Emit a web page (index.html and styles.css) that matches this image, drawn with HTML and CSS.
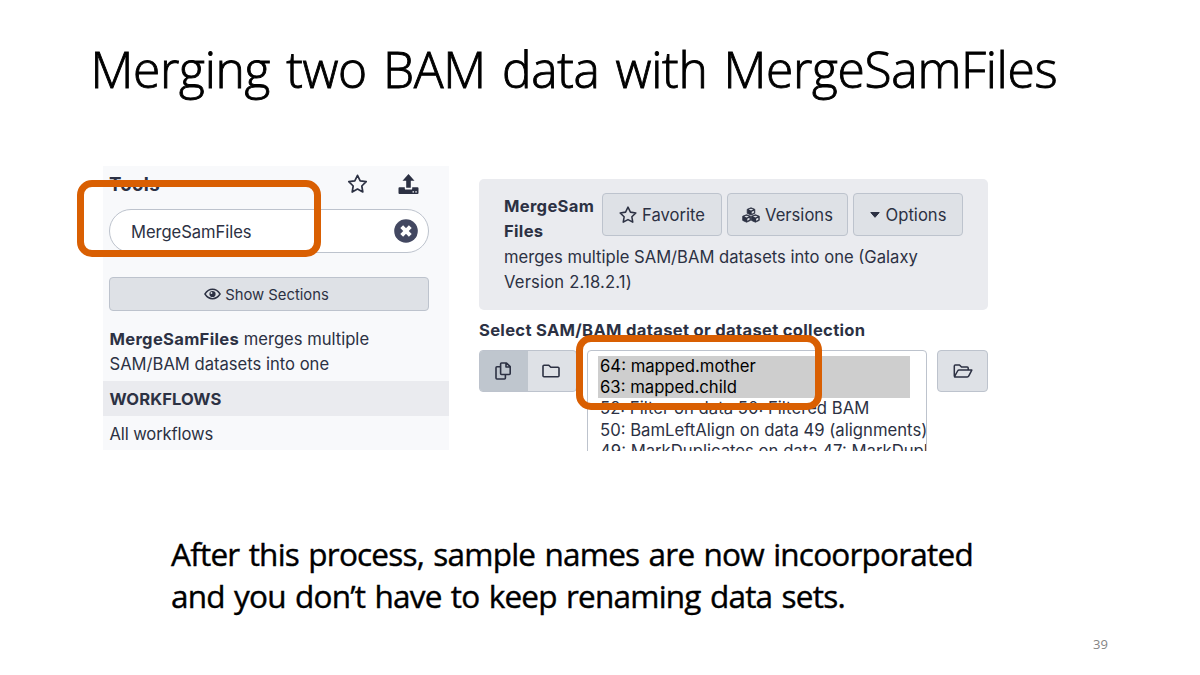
FILE: index.html
```html
<!DOCTYPE html>
<html lang="en">
<head>
<meta charset="utf-8">
<title>Merging two BAM data with MergeSamFiles</title>
<link rel="stylesheet" href="styles.css">
</head>
<body>
<svg width="0" height="0" class="defs">
  <symbol id="star" viewBox="0 0 20 20"><path d="M10 1.300l2.700 5.500 6 .9-4.400 4.300 1 6-5.300-2.900L4.700 18l1-6L1.300 7.700l6-.9z" fill="none" stroke="currentColor" stroke-width="1.700" stroke-linejoin="round"/></symbol>
</svg>
<main class="slide">
  <h1 class="title">Merging two BAM data with MergeSamFiles</h1>
  <div class="figures">
    <section class="tools">
      <header class="tools-head">
        <b>Tools</b>
        <svg class="ico20"><use href="#star"/></svg>
        <svg class="ico20" viewBox="0 0 20 20"><path d="M10 0l6 6.700h-3.700v7H7.700v-7H4z" fill="currentColor"/><path d="M0 14.200q0-1 1-1h5.300v1.500q0 .9 1 .9h5.400q1 0 1-.9v-1.500H19q1 0 1 1V19q0 1-1 1H1q-1 0-1-1z" fill="currentColor"/><path d="M14 17.300h1.500v1.200H14zM16.800 17.300h1.500v1.200h-1.500z" fill="#f8f9fb"/></svg>
      </header>
      <div class="search"><span>MergeSamFiles</span>
        <svg class="clear" viewBox="0 0 24 24"><circle cx="12" cy="12" r="11.800" fill="#434861"/><path d="M7.700 7.700l8.600 8.600M16.300 7.700l-8.600 8.600" stroke="#fff" stroke-width="4"/></svg>
      </div>
      <div class="btn sections">
        <svg class="eye" viewBox="0 0 18 12"><path d="M1 6q3.200-5 8-5t8 5q-3.200 5-8 5T1 6z" fill="none" stroke="currentColor" stroke-width="1.500"/><circle cx="9" cy="6" r="3.300" fill="currentColor"/><circle cx="7.900" cy="4.900" r="1" fill="#dee1e6"/></svg>
        <span>Show Sections</span>
      </div>
      <p class="result"><b>MergeSamFiles</b> merges multiple<br>SAM/BAM datasets into one</p>
      <div class="wf"><b>WORKFLOWS</b></div>
      <div class="all">All workflows</div>
    </section>
    <section class="form">
      <div class="card">
        <div class="card-top">
          <b class="name">MergeSam<br>Files</b>
          <div class="actions">
            <div class="btn fav"><svg class="ico18"><use href="#star"/></svg><span>Favorite</span></div>
            <div class="btn ver"><svg class="cubes" viewBox="0 0 18 16"><g fill="currentColor" stroke="currentColor" stroke-width=".8" stroke-linejoin="round"><path d="M9 .8l3.800 1.500v4L9 8 5.200 6.300v-4z"/><path d="M4.600 7.700l3.900 1.500v4.200l-3.900 1.800-3.900-1.800V9.200z"/><path d="M13.400 7.700l3.900 1.500v4.200l-3.900 1.800-3.900-1.800V9.200z"/></g><path d="M6.600 2.600L9 1.700l2.400.9L9 3.500zM2.200 9.600l2.400-.9 2.400.9-2.400.9zM11 9.600l2.400-.9 2.400.9-2.400.9zM9.700 4.700l2.200-.9v2L9.700 6.800zM5.300 11.700l2.200-.9v2l-2.200 1zM14.100 11.700l2.200-.9v2l-2.200 1z" fill="#dee1e6"/></svg><span>Versions</span></div>
            <div class="btn opt"><svg class="caret" viewBox="0 0 10 6"><path d="M.8.500h8.400L5 5.300z" fill="currentColor" stroke="currentColor" stroke-linejoin="round"/></svg><span>Options</span></div>
          </div>
        </div>
        <p>merges multiple SAM/BAM datasets into one (Galaxy<br><span class="version">Version 2.18.2.1)</span></p>
      </div>
      <div class="label"><b>Select SAM/BAM dataset or dataset collection</b></div>
      <div class="picker">
        <div class="group">
          <div class="seg on"><svg class="ico18" viewBox="0 0 18 18" fill="none" stroke="currentColor" stroke-width="1.600" stroke-linejoin="round"><path d="M7.500 1h5l3.700 3.600v7q0 .9-.9.900H7.500q-.9 0-.9-.9V1.900q0-.9.900-.9zM12 1v4h4M6.500 4.800H2.900q-.9 0-.9.900v10.400q0 .9.900.9h7.600q.9 0 .9-.9v-3.400"/></svg></div>
          <div class="seg"><svg class="ico18" viewBox="0 0 18 18" fill="none" stroke="currentColor" stroke-width="1.600" stroke-linejoin="round"><path d="M2 3.200h4.800l2 2H16q1 0 1 1V13.800q0 1-1 1H2q-1 0-1-1V4.200q0-1 1-1z"/></svg></div>
        </div>
        <div class="list">
          <div class="sel">64: mapped.mother</div>
          <div class="sel">63: mapped.child</div>
          <div>52: Filter on data 50: Filtered BAM</div>
          <div>50: BamLeftAlign on data 49 (alignments)</div>
          <div>49: MarkDuplicates on data 47: MarkDuplicates</div>
        </div>
        <div class="btn browse"><svg viewBox="0 0 20 14" width="20" height="14" fill="none" stroke="currentColor" stroke-width="1.500" stroke-linejoin="round"><path d="M1.300 12.200V2q0-1 1-1h4.200l2 2h5.700q1 0 1 1v2M1.500 12.700L4.600 7q.5-.9 1.500-.9h12.700l-3 5.800q-.5 1-1.500 1H1.700z"/></svg></div>
      </div>
    </section>
    <div class="mark mark-search"></div>
    <div class="mark mark-data"></div>
  </div>
  <p class="caption">After this process, sample names are now incoorporated<br>and you don’t have to keep renaming data sets.</p>
  <footer class="page">39</footer>
</main>
</body>
</html>
```
FILE: styles.css
```css
* { box-sizing: border-box; }
body { margin: 0; background: #fff; }
h1, p { margin: 0; font-weight: 400; }
svg { flex: none; display: block; }
.defs { position: absolute; }
.slide { width: 1200px; height: 675px; overflow: hidden; display: flex; flex-direction: column; color: #000; font-family: "Open Sans", sans-serif; }
.title { height: 166px; padding: 35px 0 0 90.500px; font-size: 49.700px; line-height: 68px; font-weight: 300; letter-spacing: -.3px; word-spacing: 3.400px; white-space: nowrap; -webkit-text-stroke: .9px #000; }

.figures { position: relative; height: 285px; padding-left: 103px; display: flex; gap: 30px; font: 16.600px/25px Inter, sans-serif; color: #2c3143; white-space: nowrap; }
.figures b { letter-spacing: .3px; }
.ico20 { width: 21px; height: 20px; }
.ico18 { width: 18px; height: 18px; }
.btn { display: flex; align-items: center; justify-content: center; background: #dee1e6; border: 1px solid #bdc3cd; border-radius: 4px; }
.btn span { padding-top: 1px; }

.tools { width: 346px; height: 284px; background: #f8f9fb; }
.tools-head { height: 43px; padding: 0 30px 7px 6px; display: flex; align-items: center; }
.tools-head b { margin-right: auto; font-size: 18.700px; }
.tools-head .ico20 + .ico20 { margin-left: 30px; }
.search { margin: 0 20px 0 6px; height: 44px; padding: 0 10px 0 21px; border: 1px solid #bdc3cd; border-radius: 22px; background: #fff; display: flex; align-items: center; justify-content: space-between; }
.search span { letter-spacing: -.06px; padding-top: 2px; }
.clear { width: 24px; height: 24px; }
.sections { margin: 24px 20px 16px 6px; height: 34px; padding-right: 5px; gap: 4px; font-size: 14.800px; }
.sections span { padding-top: 2px; }
.eye { width: 17px; height: 12px; }
.result { padding-left: 6.500px; height: 54px; }
.wf { height: 35px; padding-left: 6.500px; line-height: 36px; background: #eaebef; }
.wf b { letter-spacing: .05px; }
.all { padding-left: 6.500px; line-height: 36px; letter-spacing: -.12px; }

.form { width: 509px; height: 285px; padding-top: 13px; overflow: hidden; }
.card { height: 131px; padding: 14px 25px 0; background: #eaebef; border-radius: 5px; }
.card-top { display: flex; justify-content: space-between; height: 51px; }
.card p { padding-top: .5px; }
.version { letter-spacing: .18px; }
.name { padding-top: 1px; }
.actions { display: flex; gap: 5px; height: 43px; }
.actions .btn { gap: 5px; }
.fav { width: 120px; }
.ver { width: 121px; }
.opt { width: 110px; }
.cubes { width: 18px; height: 16px; }
.caret { width: 10px; height: 6px; margin-right: 1px; }
.label { padding-top: 8px; height: 40px; }
.picker { display: flex; align-items: flex-start; }
.group { display: flex; width: 98px; height: 42px; border: 1px solid #bdc3cd; border-radius: 4px; overflow: hidden; background: #dee1e6; }
.seg { flex: 1; padding-right: 2px; display: flex; align-items: center; justify-content: center; }
.seg.on { background: #bfc6ce; }
.list { width: 340px; height: 130px; margin: 0 10px; padding: 5px 16px 0 10px; border: 1px solid #bdc3cd; border-radius: 4px; font-size: 16.700px; line-height: 21.200px; overflow: hidden; }
.list div { padding-left: 2px; }
.list .sel { background: #cecece; color: #000; }
.browse { width: 51px; height: 42px; }

.mark { position: absolute; border: 7px solid #d95f02; border-radius: 15px; }
.mark-search { left: 77px; top: 14px; width: 244px; height: 77px; }
.mark-data { left: 576px; top: 169px; width: 246px; height: 75px; }

.caption { padding: 82px 0 0 171px; height: 184px; font-size: 31.500px; line-height: 42px; letter-spacing: -.78px; word-spacing: 1.850px; white-space: nowrap; -webkit-text-stroke: .4px #000; }
.page { padding-left: 1093px; font-size: 13px; line-height: 18px; color: #858585; }
```
